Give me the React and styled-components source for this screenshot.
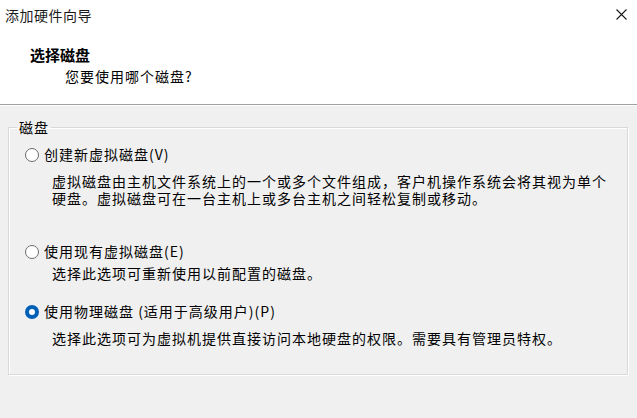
import { Fragment } from "react";
import styled, { createGlobalStyle } from "styled-components";

const OPTIONS = [
  {
    id: "new",
    label: "创建新虚拟磁盘(V)",
    desc: ["虚拟磁盘由主机文件系统上的一个或多个文件组成，客户机操作系统会将其视为单个", "硬盘。虚拟磁盘可在一台主机上或多台主机之间轻松复制或移动。"],
    gap: 10,
    after: 36,
  },
  {
    id: "existing",
    label: "使用现有虚拟磁盘(E)",
    desc: ["选择此选项可重新使用以前配置的磁盘。"],
    gap: 5,
    after: 21,
  },
  {
    id: "physical",
    label: "使用物理磁盘 (适用于高级用户)(P)",
    desc: ["选择此选项可为虚拟机提供直接访问本地硬盘的权限。需要具有管理员特权。"],
    gap: 10,
    after: 0,
  },
];

export default function App() {
  const selected = "physical";

  return (
    <>
      <GlobalStyle />
      <Window>
        <Header>
          <TitleBar>
            <Title>添加硬件向导</Title>
            <CloseButton aria-label="关闭">
              <svg width="11" height="11" viewBox="0 0 11 11">
                <path d="M0.5 0.5 L10.5 10.5 M10.5 0.5 L0.5 10.5" stroke="#1a1a1a" strokeWidth="1.1" fill="none" />
              </svg>
            </CloseButton>
          </TitleBar>
          <Heading>选择磁盘</Heading>
          <SubHeading>您要使用哪个磁盘?</SubHeading>
        </Header>
        <Content>
          <GroupBox>
            <Legend>磁盘</Legend>
            <OptionList>
              {OPTIONS.map((option) => (
                <Option key={option.id} $after={option.after}>
                  <RadioRow>
                    <Radio $checked={option.id === selected} />
                    <span>{option.label}</span>
                  </RadioRow>
                  <Desc $gap={option.gap}>
                    {option.desc.map((line, i) => (
                      <Fragment key={line}>
                        {i > 0 && <br />}
                        {line}
                      </Fragment>
                    ))}
                  </Desc>
                </Option>
              ))}
            </OptionList>
          </GroupBox>
        </Content>
      </Window>
    </>
  );
}

const GlobalStyle = createGlobalStyle`
  body {
    margin: 0;
    background: #f0f0f0;
    font-family: "Noto Sans CJK SC", "Microsoft YaHei", sans-serif;
    color: #000;
  }
`;

const Window = styled.div`
  width: 637px;
  height: 418px;
  display: flex;
  flex-direction: column;
  background: #f0f0f0;
  overflow: hidden;
`;

const Header = styled.div`
  height: 104px;
  background: #fff;
  border-bottom: 1px solid #a0a0a0;
  box-shadow: 0 1px 0 #fff;
`;

const TitleBar = styled.div`
  height: 30px;
  display: flex;
  align-items: center;
  justify-content: space-between;
  padding: 0 10px 0 5px;
`;

const Title = styled.div`
  font-size: 14px;
  letter-spacing: 0.5px;
  line-height: 30px;
  color: #1a1a1a;
`;

const CloseButton = styled.div`
  width: 11px;
  height: 11px;
  display: flex;
  margin-top: -2px;
`;

const Heading = styled.div`
  margin: 15px 0 0 30px;
  font-size: 15px;
  line-height: 20px;
  font-weight: bold;
`;

const SubHeading = styled.div`
  margin: 1px 0 0 65px;
  font-size: 14px;
  letter-spacing: 1px;
  line-height: 20px;
`;

const Content = styled.div`
  padding: 14px 9px 0 8px;
`;

const GroupBox = styled.fieldset`
  margin: 0;
  height: 256px;
  box-sizing: border-box;
  padding: 0;
  border: 1px solid #d9d9d9;
  box-shadow: inset 1px 1px 0 #fff, 1px 1px 0 #fff;
  font-size: 14px;
  letter-spacing: 1px;
`;

const Legend = styled.legend`
  margin-left: 8px;
  padding: 0 2px 0 2px;
  line-height: 17px;
`;

const OptionList = styled.div`
  padding: 10px 0 0 16px;
`;

const Option = styled.div`
  display: flex;
  flex-direction: column;
  margin-bottom: ${(p) => p.$after}px;
`;

const RadioRow = styled.label`
  display: flex;
  align-items: center;
  gap: 5px;
  line-height: 17px;
`;

const Radio = styled.span`
  width: 14px;
  height: 14px;
  box-sizing: border-box;
  border-radius: 50%;
  background: #fff;
  border: ${(p) => (p.$checked ? "4px solid #005fb8" : "1px solid #6b6b6b")};
  flex: none;
`;

const Desc = styled.p`
  margin: ${(p) => p.$gap}px 0 0 27px;
  line-height: 17px;
`;
